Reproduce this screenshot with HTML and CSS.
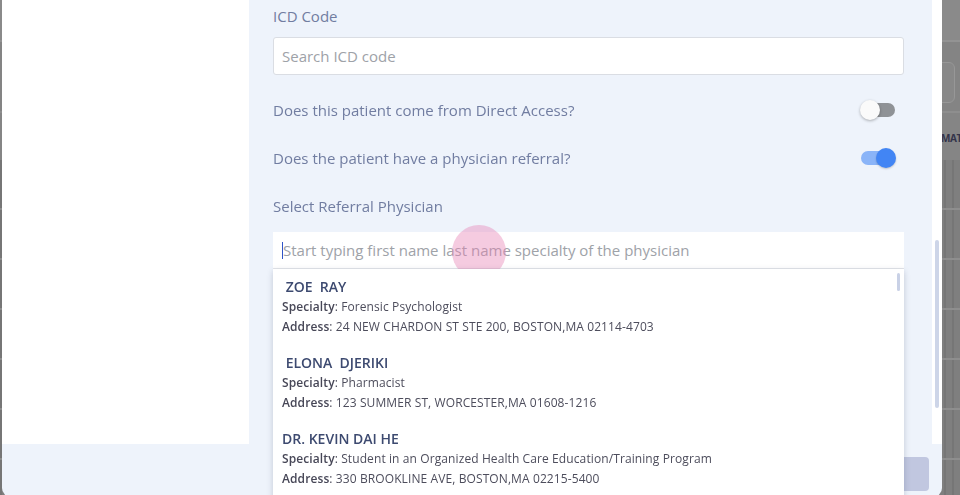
FILE: index.html
```html
<!DOCTYPE html>
<html lang="en">
<head>
<meta charset="utf-8">
<title>Referral</title>
<link rel="stylesheet" href="styles.css">
</head>
<body>
<div class="page">
  <div class="page-top"></div>
  <div class="page-toolbar"><div class="page-btn"><span class="page-btn-icon"></span></div></div>
  <div class="page-heading">MAT</div>
  <div class="page-table">
    <div class="page-row"></div>
    <div class="page-row"></div>
    <div class="page-row"></div>
    <div class="page-row"></div>
    <div class="page-row"></div>
    <div class="page-row"></div>
    <div class="page-row"></div>
  </div>
</div>

<div class="modal">
  <div class="modal-body">
    <aside class="side"></aside>
    <section class="form">
      <label class="field-label">ICD Code</label>
      <input class="text-input icd" type="text" placeholder="Search ICD code">

      <div class="toggle-row first">
        <span class="field-label">Does this patient come from Direct Access?</span>
        <span class="toggle"><span class="track"></span><span class="knob"></span></span>
      </div>
      <div class="toggle-row">
        <span class="field-label">Does the patient have a physician referral?</span>
        <span class="toggle on"><span class="track"></span><span class="knob"></span></span>
      </div>

      <label class="field-label physician-label">Select Referral Physician</label>
      <div class="combo">
        <div class="combo-input"><span class="caret"></span><span class="placeholder">Start typing first name last name specialty of the physician</span></div>
        <div class="ripple"></div>
        <div class="dropdown">
          <div class="dd-scroll"></div>
          <div class="option">
            <div class="opt-name"> ZOE  RAY</div>
            <div class="opt-line"><b>Specialty</b>: Forensic Psychologist</div>
            <div class="opt-line"><b>Address</b>: 24 NEW CHARDON ST STE 200, BOSTON,MA 02114-4703</div>
          </div>
          <div class="option">
            <div class="opt-name"> ELONA  DJERIKI</div>
            <div class="opt-line"><b>Specialty</b>: Pharmacist</div>
            <div class="opt-line"><b>Address</b>: 123 SUMMER ST, WORCESTER,MA 01608-1216</div>
          </div>
          <div class="option">
            <div class="opt-name">DR. KEVIN DAI HE</div>
            <div class="opt-line"><b>Specialty</b>: Student in an Organized Health Care Education/Training Program</div>
            <div class="opt-line"><b>Address</b>: 330 BROOKLINE AVE, BOSTON,MA 02215-5400</div>
          </div>
        </div>
      </div>
    </section>
    <div class="scrollbar"><div class="thumb"></div></div>
  </div>
  <div class="modal-footer"><button class="btn" type="button">Next</button></div>
</div>
</body>
</html>
```
FILE: styles.css
```css
* { box-sizing: border-box; }
html, body { margin: 0; padding: 0; }
body {
  width: 960px;
  height: 495px;
  overflow: hidden;
  background: #7c7c7c;
  font-family: "Open Sans", "Liberation Sans", sans-serif;
}

/* page behind the backdrop */
.page { display: flex; flex-direction: column; }
.page-top { height: 42px; background: #8a8a8a; border-bottom: 2px solid #939393; }
.page-toolbar { height: 71px; padding: 20px 0 0 880px; border-bottom: 2px solid #8e8e8e; background: #848484; }
.page-btn {
  width: 75px; height: 41px; border: 1px solid #979797; border-radius: 6px;
  background: #888; display: flex; align-items: center; justify-content: flex-end; padding-right: 13px;
}
.page-btn-icon { width: 3px; height: 8px; background: #333; border-radius: 2px; }
.page-heading {
  height: 47px; padding: 19px 0 0 941px; background: #858585;
  font: 700 10px/12px "Open Sans", sans-serif; color: #34344a; letter-spacing: -0.4px;
}
.page-table {
  display: flex; flex-direction: column;
  background: repeating-linear-gradient(90deg, #767676 0 2px, #7f7f7f 2px 8px);
}
.page-row { height: 50px; border-bottom: 2px solid #8e8e8e; }

/* modal */
.modal {
  position: fixed; left: 2px; top: -10px; width: 940px; height: 507px;
  background: #eef3fb; border-radius: 9px;
  display: flex; flex-direction: column;
}
.modal-body { height: 454px; display: flex; background: #fff; border-radius: 9px 9px 0 0; }
.side { width: 247px; background: #fff; }
.form {
  width: 683px; background: #eef3fb;
  padding: 16px 28px 0 24px;
  display: flex; flex-direction: column; align-items: stretch;
}
.scrollbar { width: 10px; background: #fff; padding: 250px 3px 0 3px; }
.thumb { height: 168px; background: #cdd5e8; border-radius: 2px; }

.field-label {
  font-size: 15px; line-height: 20px; font-weight: 500; color: #717da1;
}
.text-input {
  margin-top: 11px; height: 38px; width: 100%;
  border: 1px solid #dadde3; border-radius: 3px; background: #fff;
  padding: 0 8px; font: 15px "Open Sans", sans-serif; color: #333;
}
.text-input::placeholder { color: #9ea2a8; }

.toggle-row {
  display: flex; justify-content: space-between; align-items: center;
  height: 24px; margin-top: 24px; padding-right: 8px;
}
.toggle-row.first { margin-top: 23px; }
.toggle { position: relative; width: 36px; height: 20px; }
.track {
  position: absolute; left: 1px; top: 3px; width: 34px; height: 14px;
  border-radius: 7px; background: #8f9296;
}
.knob {
  position: absolute; left: 0; top: 0; width: 20px; height: 20px; border-radius: 50%;
  background: #fafafa; box-shadow: 0 1px 3px rgba(0,0,0,0.3);
}
.toggle.on .track { background: #8ab4f8; }
.toggle.on .knob { left: 16px; background: #4285f4; box-shadow: 0 1px 2px rgba(0,0,0,0.2); }

.physician-label { margin-top: 26px; }
.combo { position: relative; margin-top: 16px; }
.combo-input {
  height: 37px; background: #fff; border-bottom: 1px solid #e3e5ea;
  display: flex; align-items: center; padding-left: 9px;
  font-size: 15px; color: #9ea2a8;
}
.caret { width: 1px; height: 17px; background: #2f54c8; }
.ripple {
  position: absolute; left: 179px; top: -7px; width: 54px; height: 54px; border-radius: 50%;
  background: rgba(232, 130, 180, 0.42);
}
.dropdown {
  position: absolute; left: 0; top: 37px; width: 631px; height: 240px;
  background: #fff; box-shadow: 0 2px 6px rgba(40, 50, 80, 0.22);
  padding: 8px 9px 0 9px;
  display: flex; flex-direction: column; gap: 16px;
}
.dd-scroll {
  position: absolute; right: 4px; top: 4px; width: 3px; height: 18px;
  background: #c9d1e6; border-radius: 2px;
}
.option { display: flex; flex-direction: column; }
.opt-name {
  white-space: pre; font-size: 14px; line-height: 20px; font-weight: 600; color: #3d4a70;
}
.opt-line { font-size: 12px; line-height: 20px; color: #4d4d5c; letter-spacing: 0.1px; }
.opt-line b { font-weight: 600; color: #474757; }

.modal-footer {
  flex: 1; display: flex; justify-content: flex-end; align-items: flex-start;
  padding: 13px 13px 0 0;
}
.btn {
  height: 34px; width: 90px; border: 0; border-radius: 4px;
  background: #c1c7e0; color: #fff; font: 600 14px "Open Sans", sans-serif;
}
```
